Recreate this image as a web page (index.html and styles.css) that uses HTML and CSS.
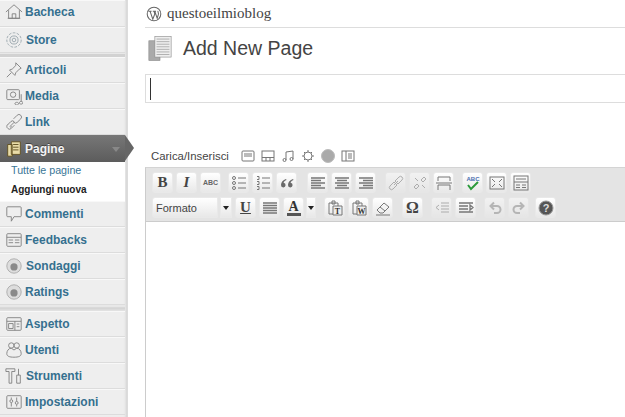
FILE: index.html
```html
<!DOCTYPE html>
<html lang="it">
<head>
<meta charset="utf-8">
<title>Add New Page</title>
<link rel="stylesheet" href="styles.css">
</head>
<body>
<div class="app">
  <nav class="side">
    <a class="item first"><svg class="ic" viewBox="0 0 20 20"><path d="M1 10 10 2l9 8M4 8v9h12V8M8 17v-5h4v5M3 17h14"/></svg><b>Bacheca</b></a>
    <a class="item"><svg class="ic wider" viewBox="0 0 20 20"><circle class="soft" cx="10" cy="10" r="8" stroke-dasharray="3 1.500"/><circle class="soft" cx="10" cy="10" r="4.500"/><circle class="soft" cx="10" cy="10" r="2"/></svg><b>Store</b></a>
    <div class="sep"></div>
    <a class="item"><svg class="ic" viewBox="0 0 20 20"><path d="M12 2l6 6-2 1-4 4-1 3-6-6 3-1 4-4zM7 13l-5 5"/></svg><b>Articoli</b></a>
    <a class="item"><svg class="ic" viewBox="0 0 20 20"><rect x="2" y="3" width="14" height="11" rx="1"/><circle cx="9" cy="8.500" r="3"/><path d="M18 8v8M13 17a2 1.500 0 1 0 .1 0M18 16a2 1.500 0 1 1-.1 0"/></svg><b>Media</b></a>
    <a class="item"><svg class="ic" viewBox="0 0 20 20"><path d="M2.500 13.500l4-4a2.500 2.500 0 0 1 3.500 0l.5.500-5 5 1 1 1-1M3 13a2.500 2.500 0 0 0 0 4 2.500 2.500 0 0 0 3.500.5l4-4M9.500 6.500l4-4a2.500 2.500 0 0 1 4 4l-4 4a2.500 2.500 0 0 1-3.500 0"/></svg><b>Link</b></a>
    <a class="item cur"><svg class="ic" viewBox="0 0 20 20"><path class="pg" d="M3 5h5v13H3zM7 2h10v14H7z"/><path d="M9 5h6M9 8h6M9 11h6"/></svg><b>Pagine</b><i class="caret"></i></a>
    <div class="sub">
      <a class="sublink">Tutte le pagine</a>
      <a class="sublink on">Aggiungi nuova</a>
    </div>
    <a class="item"><svg class="ic" viewBox="0 0 20 20"><path d="M3 2h14a1 1 0 0 1 1 1v9a1 1 0 0 1-1 1h-7l-3 5v-5H3a1 1 0 0 1-1-1V3a1 1 0 0 1 1-1z"/></svg><b>Commenti</b></a>
    <a class="item"><svg class="ic" viewBox="0 0 20 20"><rect x="2" y="3" width="16" height="14" rx="1"/><path d="M2 7h16M4 10h5M11 10h5M4 13h5M11 13h5"/></svg><b>Feedbacks</b></a>
    <a class="item"><svg class="ic ball wider" viewBox="0 0 20 20"><circle cx="10" cy="10" r="8"/><circle class="dot" cx="10" cy="11" r="4"/></svg><b>Sondaggi</b></a>
    <a class="item"><svg class="ic ball" viewBox="0 0 20 20"><circle cx="10" cy="10" r="8"/><circle class="dot" cx="10" cy="11" r="4"/></svg><b>Ratings</b></a>
    <div class="sep wide"></div>
    <a class="item"><svg class="ic" viewBox="0 0 20 20"><rect x="2" y="3" width="16" height="14" rx="1"/><path d="M2 7h16M11 7v10M4 9.500h5v5.500H4zM13 10h3M13 13h3"/></svg><b>Aspetto</b></a>
    <a class="item"><svg class="ic" viewBox="0 0 20 20"><circle cx="7" cy="5" r="3"/><circle cx="13" cy="5" r="3"/><path d="M7 8c-3 0-5 3-5 6 0 3 3 4 8 4s8-1 8-4c0-3-2-6-5-6l-3 2z"/></svg><b>Utenti</b></a>
    <a class="item"><svg class="ic wider" viewBox="0 0 20 20"><path d="M1 2h10v3H7.500v13h-3V5H1zM15 2v7M13 9h4v9h-4z"/></svg><b>Strumenti</b></a>
    <a class="item"><svg class="ic" viewBox="0 0 20 20"><rect x="2" y="3" width="16" height="14" rx="1"/><path d="M7 5v2M7 11v4M13 5v4M13 13v2"/><circle cx="7" cy="9" r="1.600"/><circle cx="13" cy="11" r="1.600"/></svg><b>Impostazioni</b></a>
  </nav>
  <main class="main">
    <header class="blog">
      <svg class="wp" viewBox="0 0 20 20"><circle cx="10" cy="10" r="8.500"/><path d="M3 6.500h4M5 6.500l3.500 10L11 10 10 6.500M8.500 6.500h4M11 6.500l3 9 1.500-5c.5-2-1-3-.5-4.500"/></svg>
      <span>questoeilmioblog</span>
    </header>
    <div class="head">
      <svg class="pages" viewBox="0 0 28 30"><rect class="back" x="1" y="6" width="13" height="23"/><rect class="front" x="8" y="1" width="19" height="24"/><path d="M10 4h15M10 7h15M10 10h15M10 13h15M10 16h15M10 19h15M10 22h15"/></svg>
      <h1>Add New Page</h1>
    </div>
    <div class="title"><span class="cursor"></span></div>
    <div class="upload">
      <span>Carica/Inserisci</span>
      <svg class="up" viewBox="0 0 14 14"><rect x="1" y="2" width="12" height="10" rx="1"/><path d="M3 5h8M3 7h8"/></svg>
      <svg class="up" viewBox="0 0 14 14"><rect x="1" y="2" width="12" height="10"/><path d="M1 8.500h12M5 8.500V12M9 8.500V12"/></svg>
      <svg class="up" viewBox="0 0 14 14"><path d="M5 11V3l7-1v8"/><circle cx="3.500" cy="11" r="1.500"/><circle cx="10.500" cy="10" r="1.500"/></svg>
      <svg class="up" viewBox="0 0 14 14"><circle cx="7" cy="7" r="4"/><path d="M7 1v2M7 11v2M1 7h2M11 7h2M3 3l1 1M10 10l1 1M3 11l1-1M10 4l1-1"/></svg>
      <svg class="up" viewBox="0 0 14 14"><circle class="disc" cx="7" cy="7" r="6.500"/></svg>
      <svg class="up" viewBox="0 0 14 14"><rect x="1" y="2" width="12" height="10"/><path d="M5 2v10M7 5h4M7 7h4M7 9h4"/></svg>
    </div>
    <section class="editor">
      <div class="bar">
        <div class="row">
          <span class="btn serif">B</span><span class="btn serif it">I</span><span class="btn tiny">ABC</span>
          <span class="gap w1"></span>
          <span class="btn"><svg class="t" viewBox="0 0 16 16"><path d="M7 3h8M7 8h8M7 13h8"/><circle cx="3" cy="3" r="1.500"/><circle cx="3" cy="8" r="1.500"/><circle cx="3" cy="13" r="1.500"/></svg></span>
          <span class="btn"><svg class="t" viewBox="0 0 16 16"><path d="M7 3h8M7 8h8M7 13h8M2 1.500h2v3H2M2 6.500h2v3H2M2 11.500h2v3H2"/></svg></span>
          <span class="btn"><svg class="t quote" viewBox="0 0 16 16"><path d="M7 4C4 5 2 7 2 10a2.300 2.300 0 1 0 2.500-2.200C5 6.500 6 5.500 7.500 5zM14 4c-3 1-5 3-5 6a2.300 2.300 0 1 0 2.500-2.200c.5-1.300 1.500-2.300 3-2.800z"/></svg></span>
          <span class="gap w4"></span>
          <span class="btn"><svg class="t lines" viewBox="0 0 16 16"><path d="M1 3h14M1 5.500h10M1 8h14M1 10.500h10M1 13h14"/></svg></span>
          <span class="btn"><svg class="t lines" viewBox="0 0 16 16"><path d="M1 3h14M3 5.500h10M1 8h14M3 10.500h10M1 13h14"/></svg></span>
          <span class="btn"><svg class="t lines" viewBox="0 0 16 16"><path d="M1 3h14M5 5.500h10M1 8h14M5 10.500h10M1 13h14"/></svg></span>
          <span class="gap w3"></span>
          <span class="btn off"><svg class="t" viewBox="0 0 16 16"><path d="M2 11l4-4 3 3-4 4a2 2 0 0 1-3-3zM7 6l4-4a2 2 0 0 1 3 3l-4 4zM6 10l4-4"/></svg></span>
          <span class="btn off"><svg class="t" viewBox="0 0 16 16"><path d="M2 12l3-3 2 2-3 3zM9 5l3-3 2 2-3 3zM3 3l3 3M10 10l3 3"/></svg></span>
          <span class="btn"><svg class="t" viewBox="0 0 16 16"><path d="M2 6V2h12v4M0 8h16M2 15v-5h12v5"/></svg></span>
          <span class="gap w2"></span>
          <span class="btn"><svg class="t spell" viewBox="0 0 16 16"><text x="8" y="6">ABC</text><path class="chk" d="M3 10l3 4 7-7"/></svg></span>
          <span class="btn"><svg class="t" viewBox="0 0 16 16"><rect x="1" y="2" width="14" height="12"/><path d="M3 4l3 3M13 4l-3 3M3 12l3-3M13 12l-3-3"/></svg></span>
          <span class="btn"><svg class="t" viewBox="0 0 16 16"><rect x="1" y="1" width="14" height="14"/><path d="M3 4h10M1 7h14M3 10h4M9 10h4M3 12.500h4M9 12.500h4"/></svg></span>
        </div>
        <div class="row">
          <span class="select"><span>Formato</span></span><span class="arrow sel"><i class="drop"></i></span>
          <span class="btn serif under">U</span>
          <span class="btn"><svg class="t lines" viewBox="0 0 16 16"><path d="M1 3h14M1 5.500h14M1 8h14M1 10.500h14M1 13h14"/></svg></span>
          <span class="btn color"><span class="serif-a">A</span><i class="swatch"></i></span><span class="arrow"><i class="drop"></i></span>
          <span class="gap w2"></span>
          <span class="btn"><svg class="t clip" viewBox="0 0 16 16"><path d="M2 3h9v11H2z"/><path d="M5 1h3v3H5z"/><path class="fill" d="M6 6h9v9H6z"/><text x="10.500" y="13.500">T</text></svg></span>
          <span class="btn"><svg class="t clip" viewBox="0 0 16 16"><path d="M2 3h9v11H2z"/><path d="M5 1h3v3H5z"/><path class="fill" d="M6 6h9v9H6z"/><text x="10.500" y="13.500">W</text></svg></span>
          <span class="btn"><svg class="t" viewBox="0 0 16 16"><path d="M2 10l7-7 5 4-6 6H5zM5 7l5 4M1 15h14"/></svg></span>
          <span class="gap w3"></span>
          <span class="btn serif omega">Ω</span>
          <span class="gap w2"></span>
          <span class="btn off"><svg class="t" viewBox="0 0 16 16"><path d="M7 3h8M7 6h8M7 9h8M7 12h8M5 5L2 7.500 5 10"/></svg></span>
          <span class="btn"><svg class="t lines" viewBox="0 0 16 16"><path d="M1 3h14M1 6h9M1 9h9M1 12h14M12 5l3 2.500-3 2.500z"/></svg></span>
          <span class="gap w2"></span>
          <span class="btn off"><svg class="t thick" viewBox="0 0 16 16"><path d="M5 6h5a3.500 3.500 0 0 1 0 7H7M7 2.500L3.500 6 7 9.500"/></svg></span>
          <span class="btn off"><svg class="t thick" viewBox="0 0 16 16"><path d="M11 6H6a3.500 3.500 0 0 0 0 7h3M9 2.500L12.500 6 9 9.500"/></svg></span>
          <span class="gap w0"></span>
          <span class="btn"><svg class="t help" viewBox="0 0 16 16"><circle cx="8" cy="8" r="7"/><text x="8" y="12" text-anchor="middle">?</text></svg></span>
        </div>
      </div>
      <div class="area"></div>
    </section>
  </main>
</div>
</body>
</html>
```
FILE: styles.css
```css
html,body{margin:0;padding:0;width:625px;height:417px;overflow:hidden;background:#fff}
body{font-family:"Liberation Sans",Arial,sans-serif;color:#333}
.app{display:flex;height:417px}
.side{width:127px;flex:none;background:#eee;border-right:1px solid #dcdcdc;display:flex;flex-direction:column;box-shadow:inset -3px 0 3px -2px #cfcfcf}
.item{height:26px;box-sizing:border-box;flex:none;display:flex;align-items:center;padding-left:5px;gap:2px;border-top:1px solid #f8f8f8;border-bottom:1px solid #dcdcdc;color:#35708f;font-size:12px;position:relative;margin-right:2px}
.item.first{height:27px;padding-bottom:3px}
.item b{font-weight:700}
.ic{width:18px;height:18px;flex:none;fill:none;stroke:#808080;stroke-width:1}
.ic.wider{margin-right:1px}
.soft{stroke:#9aa6ad}
.ball circle:first-child{fill:#ddd;stroke:#aaa}
.ball .dot{fill:#8a8a8a;stroke:none}
.sep{height:4px;flex:none;background:#d2d2d2;border-top:1px solid #e8e8e8;box-sizing:border-box;margin-right:2px}
.sep.wide{height:6px;background:linear-gradient(#eee,#d2d2d2 40%,#e4e4e4)}
.cur{background:linear-gradient(#777,#5c5c5c);color:#fff;width:125px;margin:0;border:0;height:27px}
.cur .ic{stroke:#5c4c1e}
.cur .pg{fill:#e9dca8}
.cur b{text-shadow:0 -1px 0 #444;color:#f4f4f4}
.cur::after{content:"";position:absolute;left:125px;top:0;border-left:9px solid #666;border-top:13.500px solid transparent;border-bottom:13.500px solid transparent}
.caret{position:absolute;left:112px;top:12px;border-top:5px solid #888;border-left:4px solid transparent;border-right:4px solid transparent}
.sub{height:35px;padding-bottom:4px;flex:none;background:#fff;margin-right:2px;display:flex;flex-direction:column;justify-content:center;padding-left:11px;font-size:10.700px;line-height:19px}
.sublink{color:#3a7696}
.sublink.on{color:#222;font-weight:700;font-size:10px}
.main{flex:1;min-width:0;padding-left:17px;display:flex;flex-direction:column}
.blog{height:27px;flex:none;display:flex;align-items:center;gap:5px;border-bottom:1px solid #ddd;font-family:"Liberation Serif",serif;font-size:15px;color:#444}
.wp{width:16px;height:16px;flex:none;fill:none;stroke:#666;stroke-width:1.300;margin-left:1px}
.head{height:40px;padding-bottom:6px;flex:none;display:flex;align-items:center;gap:11px;padding-left:3px}
.pages{width:24px;height:27px;flex:none;stroke:#888;stroke-width:.7;fill:none}
.pages .back{fill:#aaa}
.pages .front{fill:#eee}
h1{margin:0;font-weight:400;font-size:19.500px;color:#444}
.title{height:27px;flex:none;border:1px solid #ddd;border-right:0;display:flex;align-items:center;padding-left:4px}
.cursor{width:1px;height:22px;background:#333}
.upload{height:20px;flex:none;margin-top:43px;display:flex;align-items:center;gap:6px;font-size:11.400px;padding-left:6px;color:#444}
.upload span{margin-right:6px}
.up{width:14px;height:14px;flex:none;fill:none;stroke:#777;stroke-width:1}
.disc{fill:#aaa;stroke:#bbb}
.editor{flex:1;border-left:1px solid #ccc;margin-top:1px;border-top:1px solid #d4d4d4;display:flex;flex-direction:column}
.bar{background:#e4e4e4;height:54px;flex:none;padding:3px 0 0 6px;border-bottom:1px solid #ccc;box-sizing:border-box}
.row{height:23px;display:flex;align-items:center;margin-bottom:2px;gap:3px}
.btn{width:21px;height:21px;flex:none;box-sizing:border-box;background:linear-gradient(#fff,#e8e8e8);border:1px solid #e9e9e9;border-radius:3px;display:flex;align-items:center;justify-content:center;color:#333}
.btn.off{opacity:.5}
.gap{flex:none}
.w0{width:0}
.w1{width:1px}
.w2{width:2px}
.w3{width:3px}
.w4{width:4px}
.serif{font-family:"Liberation Serif",serif;font-weight:700;font-size:15px;color:#444}
.it{font-style:italic}
.tiny{font-size:7px;font-weight:700;color:#666}
.under{text-decoration:underline}
.omega{font-size:16px}
.t{width:16px;height:16px;flex:none;fill:none;stroke:#777;stroke-width:1}
.t.quote{fill:#6a6a6a;stroke:none}
.lines{stroke:#777;stroke-width:1.300}
.t .fill{fill:#eee}
.clip text{fill:#333;stroke:none;font-size:8px;font-weight:700;text-anchor:middle;font-family:"Liberation Serif",serif}
.thick{stroke:#888;stroke-width:2}
.spell .chk{stroke:#2b9a3b;stroke-width:2}
.spell text{fill:#4a6fb0;stroke:none;font-size:6px;font-weight:700;text-anchor:middle;font-family:"Liberation Sans",sans-serif}
.help circle{fill:#555;stroke:#999}
.help text{fill:#ddd;stroke:none;font-size:11px;font-weight:700;font-family:"Liberation Sans",sans-serif}
.select{width:66px;height:21px;flex:none;box-sizing:border-box;background:linear-gradient(#fff,#e8e8e8);border:1px solid #e9e9e9;border-radius:3px 0 0 3px;display:flex;align-items:center;padding:0 3px;font-size:11px;color:#444}
.drop{display:block;border-top:4px solid #222;border-left:3px solid transparent;border-right:3px solid transparent}
.color{flex-direction:column}
.serif-a{font-family:"Liberation Serif",serif;font-weight:700;font-size:14px;line-height:13px;color:#333}
.swatch{display:block;width:14px;height:3px;background:#555}
.arrow{width:10px;height:21px;flex:none;box-sizing:border-box;background:linear-gradient(#fff,#e8e8e8);border:1px solid #e9e9e9;display:flex;align-items:center;justify-content:center;margin-left:-1px}
.arrow.sel{width:12px}
.area{flex:1;background:#fff}
```
